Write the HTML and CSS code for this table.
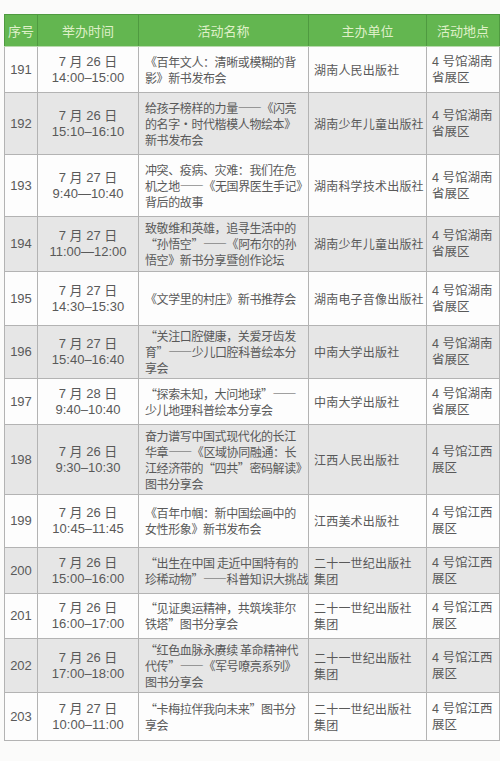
FILE: index.html
```html
<!DOCTYPE html>
<html lang="zh">
<head>
<meta charset="utf-8">
<link rel="stylesheet" href="styles.css">
</head>
<body>
<div class="page">
<table class="sched">
  <colgroup>
    <col class="c1"><col class="c2"><col class="c3"><col class="c4"><col class="c5">
  </colgroup>
  <thead>
    <tr class="head">
      <th>序号</th><th>举办时间</th><th>活动名称</th><th>主办单位</th><th>活动地点</th>
    </tr>
  </thead>
  <tbody>
    <tr class="h46">
      <td class="num">191</td><td class="time">7 月 26 日<br>14:00–15:00</td>
      <td class="name">《百年文人：清晰或模糊的背<br>影》新书发布会</td>
      <td class="org">湖南人民出版社</td><td class="loc">4 号馆湖南<br>省展区</td>
    </tr>
    <tr class="h62 alt">
      <td class="num">192</td><td class="time">7 月 26 日<br>15:10–16:10</td>
      <td class="name">给孩子榜样的力量——《闪亮<br>的名字·时代楷模人物绘本》<br>新书发布会</td>
      <td class="org">湖南少年儿童出版社</td><td class="loc">4 号馆湖南<br>省展区</td>
    </tr>
    <tr class="h62">
      <td class="num">193</td><td class="time">7 月 27 日<br>9:40—10:40</td>
      <td class="name">冲突、疫病、灾难：我们在危<br>机之地——《无国界医生手记》<br>背后的故事</td>
      <td class="org">湖南科学技术出版社</td><td class="loc">4 号馆湖南<br>省展区</td>
    </tr>
    <tr class="h55 alt">
      <td class="num">194</td><td class="time">7 月 27 日<br>11:00—12:00</td>
      <td class="name">致敬维和英雄，追寻生活中的<br>“孙悟空”——《阿布尔的孙<br>悟空》新书分享暨创作论坛</td>
      <td class="org">湖南少年儿童出版社</td><td class="loc">4 号馆湖南<br>省展区</td>
    </tr>
    <tr class="h54">
      <td class="num">195</td><td class="time">7 月 27 日<br>14:30–15:30</td>
      <td class="name">《文学里的村庄》新书推荐会</td>
      <td class="org">湖南电子音像出版社</td><td class="loc">4 号馆湖南<br>省展区</td>
    </tr>
    <tr class="h53 alt">
      <td class="num">196</td><td class="time">7 月 27 日<br>15:40–16:40</td>
      <td class="name">“关注口腔健康，关爱牙齿发<br>育”——少儿口腔科普绘本分<br>享会</td>
      <td class="org">中南大学出版社</td><td class="loc">4 号馆湖南<br>省展区</td>
    </tr>
    <tr class="h46">
      <td class="num">197</td><td class="time">7 月 28 日<br>9:40–10:40</td>
      <td class="name">“探索未知，大问地球”——<br>少儿地理科普绘本分享会</td>
      <td class="org">中南大学出版社</td><td class="loc">4 号馆湖南<br>省展区</td>
    </tr>
    <tr class="h70 alt">
      <td class="num">198</td><td class="time">7 月 26 日<br>9:30–10:30</td>
      <td class="name">奋力谱写中国式现代化的长江<br>华章——《区域协同融通：长<br>江经济带的“四共”密码解读》<br>图书分享会</td>
      <td class="org">江西人民出版社</td><td class="loc">4 号馆江西<br>展区</td>
    </tr>
    <tr class="h53">
      <td class="num">199</td><td class="time">7 月 26 日<br>10:45–11:45</td>
      <td class="name">《百年巾帼：新中国绘画中的<br>女性形象》新书发布会</td>
      <td class="org">江西美术出版社</td><td class="loc">4 号馆江西<br>展区</td>
    </tr>
    <tr class="h46 alt">
      <td class="num">200</td><td class="time">7 月 26 日<br>15:00–16:00</td>
      <td class="name">“出生在中国 走近中国特有的<br>珍稀动物”——科普知识大挑战</td>
      <td class="org">二十一世纪出版社<br>集团</td><td class="loc">4 号馆江西<br>展区</td>
    </tr>
    <tr class="h45">
      <td class="num">201</td><td class="time">7 月 26 日<br>16:00–17:00</td>
      <td class="name">“见证奥运精神，共筑埃菲尔<br>铁塔”图书分享会</td>
      <td class="org">二十一世纪出版社<br>集团</td><td class="loc">4 号馆江西<br>展区</td>
    </tr>
    <tr class="h54 alt">
      <td class="num">202</td><td class="time">7 月 26 日<br>17:00–18:00</td>
      <td class="name">“红色血脉永赓续 革命精神代<br>代传”——《军号嘹亮系列》<br>图书分享会</td>
      <td class="org">二十一世纪出版社<br>集团</td><td class="loc">4 号馆江西<br>展区</td>
    </tr>
    <tr class="h48">
      <td class="num">203</td><td class="time">7 月 27 日<br>10:00–11:00</td>
      <td class="name">“卡梅拉伴我向未来”图书分<br>享会</td>
      <td class="org">二十一世纪出版社<br>集团</td><td class="loc">4 号馆江西<br>展区</td>
    </tr>
  </tbody>
</table>
</div>
</body>
</html>
```
FILE: styles.css
```css
html, body {
  margin: 0;
  padding: 0;
  background: #fbfbfa;
}
.page {
  padding: 14px 1px 21px 4px;
}
.sched {
  border-collapse: collapse;
  table-layout: fixed;
  width: 495px;
  font-family: "Noto Sans CJK SC", "Liberation Sans", sans-serif;
  font-size: 12px;
  line-height: 16px;
  color: #595959;
}
.c1 { width: 33px; }
.c2 { width: 101px; }
.c3 { width: 170px; }
.c4 { width: 118px; }
.c5 { width: 73px; }

.head th {
  background: #63b650;
  color: #dff0c8;
  font-weight: normal;
  font-size: 13px;
  height: 31px;
  padding: 0;
  border: 1px solid #4f9a40;
  border-bottom-color: #b9d9ae;
}
.sched td {
  border: 1px solid #b3b3b3;
  padding: 0;
  vertical-align: middle;
  background: #fdfdfd;
  white-space: nowrap;
  overflow: hidden;
}
.sched tr.alt td {
  background: #e6e6e6;
}
.sched td.num {
  text-align: center;
  font-family: "Liberation Sans", sans-serif;
  font-size: 13px;
}
.sched td.time {
  text-align: center;
  font-family: "Liberation Sans", "Noto Sans CJK SC", sans-serif;
  font-size: 13px;
}
.sched td.name {
  padding-left: 6px;
  letter-spacing: -0.4px;
}
.sched td.org {
  padding-left: 5px;
  letter-spacing: 0.2px;
}
.sched td.loc {
  padding-left: 5px;
  font-family: "Liberation Sans", "Noto Sans CJK SC", sans-serif;
  font-size: 12.5px;
}
.h45 td { height: 44px; }
.h46 td { height: 45px; }
.h48 td { height: 47px; }
.h53 td { height: 52px; }
.h54 td { height: 53px; }
.h55 td { height: 54px; }
.h62 td { height: 61px; }
.h70 td { height: 69px; }
```
